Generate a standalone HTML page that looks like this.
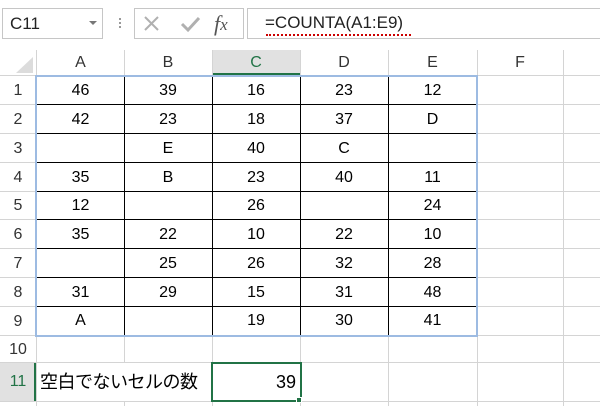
<!DOCTYPE html>
<html><head><meta charset="utf-8"><style>
*{margin:0;padding:0;box-sizing:border-box}
body{width:600px;height:406px;background:#fff;position:relative;overflow:hidden;font-family:"Liberation Sans","Noto Sans CJK JP",sans-serif;color:#000}
.a{position:absolute}
.h{position:absolute;height:1px;background:#d4d4d4}
.v{position:absolute;width:1px;background:#d4d4d4}
.hb{position:absolute;height:1px;background:#000}
.vb{position:absolute;width:1px;background:#000}
.c{position:absolute;text-align:center;font-size:16px;line-height:29px;height:29px}
.ch{position:absolute;top:50px;height:25px;line-height:25px;text-align:center;font-size:16px;color:#333}
.rh{position:absolute;left:0;width:36px;text-align:center;font-size:16px;color:#333}
</style></head><body>
<div class="a" style="left:2px;top:8px;width:101px;height:31px;border:1px solid #c6c6c6;font-size:17px;line-height:29px;padding-left:7px;color:#222">C11</div>
<div class="a" style="left:89px;top:21px;width:0;height:0;border-left:4px solid transparent;border-right:4px solid transparent;border-top:4px solid #777"></div>
<div class="a" style="left:119px;top:18px;width:2px;height:2px;background:#999;box-shadow:0 4px #999,0 8px #999"></div>
<div class="a" style="left:134px;top:8px;width:110px;height:31px;border:1px solid #c6c6c6"></div>
<svg class="a" style="left:142px;top:12px" width="100" height="24"><path d="M3 5 L16 18 M16 5 L3 18" stroke="#b0b0b0" stroke-width="2"/><path d="M40 12 L46 18 L57 6" stroke="#b0b0b0" stroke-width="3" fill="none"/><text x="72" y="19" font-family="Liberation Serif,serif" font-style="italic" font-size="22" fill="#555">f<tspan font-size="17" dy="-1">x</tspan></text></svg>
<div class="a" style="left:247px;top:8px;width:360px;height:31px;border:1px solid #c6c6c6"></div>
<div class="a" style="left:265px;top:9px;font-size:17px;line-height:27px;color:#222">=COUNTA(A1:E9)</div>
<div class="a" style="left:266px;top:34px;width:145px;border-top:2px dotted #c00"></div>
<div class="a" style="left:212px;top:50px;width:88px;height:25px;background:#e1e1e1;border-bottom:2px solid #217346"></div>
<svg class="a" style="left:14px;top:57px" width="20" height="16"><path d="M19 0 L19 16 L2 16 Z" fill="#dcdcdc"/></svg>
<div class="ch" style="left:37px;width:87px">A</div>
<div class="ch" style="left:124px;width:88px">B</div>
<div class="ch" style="left:212px;width:88px;color:#217346">C</div>
<div class="ch" style="left:300px;width:88px">D</div>
<div class="ch" style="left:388px;width:89px">E</div>
<div class="ch" style="left:477px;width:86px">F</div>
<div class="a" style="left:0;top:363px;width:36px;height:38px;background:#e1e1e1;border-right:2px solid #217346"></div>
<div class="rh" style="top:76px;line-height:29px">1</div>
<div class="rh" style="top:105px;line-height:29px">2</div>
<div class="rh" style="top:134px;line-height:29px">3</div>
<div class="rh" style="top:163px;line-height:29px">4</div>
<div class="rh" style="top:192px;line-height:28px">5</div>
<div class="rh" style="top:220px;line-height:29px">6</div>
<div class="rh" style="top:249px;line-height:29px">7</div>
<div class="rh" style="top:278px;line-height:29px">8</div>
<div class="rh" style="top:307px;line-height:29px">9</div>
<div class="rh" style="top:336px;line-height:27px">10</div>
<div class="rh" style="top:363px;line-height:38px;color:#217346">11</div>
<div class="v" style="left:36px;top:50px;height:356px"></div>
<div class="v" style="left:124px;top:50px;height:356px"></div>
<div class="v" style="left:212px;top:50px;height:356px"></div>
<div class="v" style="left:300px;top:50px;height:356px"></div>
<div class="v" style="left:388px;top:50px;height:356px"></div>
<div class="v" style="left:477px;top:50px;height:356px"></div>
<div class="v" style="left:563px;top:50px;height:356px"></div>
<div class="h" style="left:0;top:75px;width:600px"></div>
<div class="h" style="left:0;top:104px;width:600px"></div>
<div class="h" style="left:0;top:133px;width:600px"></div>
<div class="h" style="left:0;top:162px;width:600px"></div>
<div class="h" style="left:0;top:191px;width:600px"></div>
<div class="h" style="left:0;top:219px;width:600px"></div>
<div class="h" style="left:0;top:248px;width:600px"></div>
<div class="h" style="left:0;top:277px;width:600px"></div>
<div class="h" style="left:0;top:306px;width:600px"></div>
<div class="h" style="left:0;top:335px;width:600px"></div>
<div class="h" style="left:0;top:362px;width:600px"></div>
<div class="h" style="left:0;top:401px;width:600px"></div>
<div class="a" style="left:37px;top:363px;width:175px;height:38px;background:#fff"></div>
<div class="vb" style="left:124px;top:76px;height:259px"></div>
<div class="vb" style="left:212px;top:76px;height:259px"></div>
<div class="vb" style="left:300px;top:76px;height:259px"></div>
<div class="vb" style="left:388px;top:76px;height:259px"></div>
<div class="hb" style="left:37px;top:104px;width:440px"></div>
<div class="hb" style="left:37px;top:133px;width:440px"></div>
<div class="hb" style="left:37px;top:162px;width:440px"></div>
<div class="hb" style="left:37px;top:191px;width:440px"></div>
<div class="hb" style="left:37px;top:219px;width:440px"></div>
<div class="hb" style="left:37px;top:248px;width:440px"></div>
<div class="hb" style="left:37px;top:277px;width:440px"></div>
<div class="hb" style="left:37px;top:306px;width:440px"></div>
<div class="a" style="left:35px;top:75px;width:443px;height:262px;border:2px solid #9dbbe2"></div>
<div class="c" style="left:37px;top:76px;width:87px">46</div><div class="c" style="left:124px;top:76px;width:88px">39</div><div class="c" style="left:212px;top:76px;width:88px">16</div><div class="c" style="left:300px;top:76px;width:88px">23</div><div class="c" style="left:388px;top:76px;width:89px">12</div>
<div class="c" style="left:37px;top:105px;width:87px">42</div><div class="c" style="left:124px;top:105px;width:88px">23</div><div class="c" style="left:212px;top:105px;width:88px">18</div><div class="c" style="left:300px;top:105px;width:88px">37</div><div class="c" style="left:388px;top:105px;width:89px">D</div>
<div class="c" style="left:124px;top:134px;width:88px">E</div><div class="c" style="left:212px;top:134px;width:88px">40</div><div class="c" style="left:300px;top:134px;width:88px">C</div>
<div class="c" style="left:37px;top:163px;width:87px">35</div><div class="c" style="left:124px;top:163px;width:88px">B</div><div class="c" style="left:212px;top:163px;width:88px">23</div><div class="c" style="left:300px;top:163px;width:88px">40</div><div class="c" style="left:388px;top:163px;width:89px">11</div>
<div class="c" style="left:37px;top:191px;width:87px">12</div><div class="c" style="left:212px;top:191px;width:88px">26</div><div class="c" style="left:388px;top:191px;width:89px">24</div>
<div class="c" style="left:37px;top:220px;width:87px">35</div><div class="c" style="left:124px;top:220px;width:88px">22</div><div class="c" style="left:212px;top:220px;width:88px">10</div><div class="c" style="left:300px;top:220px;width:88px">22</div><div class="c" style="left:388px;top:220px;width:89px">10</div>
<div class="c" style="left:124px;top:249px;width:88px">25</div><div class="c" style="left:212px;top:249px;width:88px">26</div><div class="c" style="left:300px;top:249px;width:88px">32</div><div class="c" style="left:388px;top:249px;width:89px">28</div>
<div class="c" style="left:37px;top:278px;width:87px">31</div><div class="c" style="left:124px;top:278px;width:88px">29</div><div class="c" style="left:212px;top:278px;width:88px">15</div><div class="c" style="left:300px;top:278px;width:88px">31</div><div class="c" style="left:388px;top:278px;width:89px">48</div>
<div class="c" style="left:37px;top:306px;width:87px">A</div><div class="c" style="left:212px;top:306px;width:88px">19</div><div class="c" style="left:300px;top:306px;width:88px">30</div><div class="c" style="left:388px;top:306px;width:89px">41</div>
<div class="a" style="left:40px;top:363px;font-size:18px;line-height:38px;white-space:nowrap;letter-spacing:-0.5px">空白でないセルの数</div>
<div class="a" style="left:211px;top:362px;width:91px;height:40px;border:2px solid #217346"></div>
<div class="a" style="left:296px;top:397px;width:6px;height:6px;background:#217346;border:1px solid #fff"></div>
<div class="a" style="left:212px;top:363px;width:84px;text-align:right;font-size:18px;line-height:38px">39</div>
</body></html>
